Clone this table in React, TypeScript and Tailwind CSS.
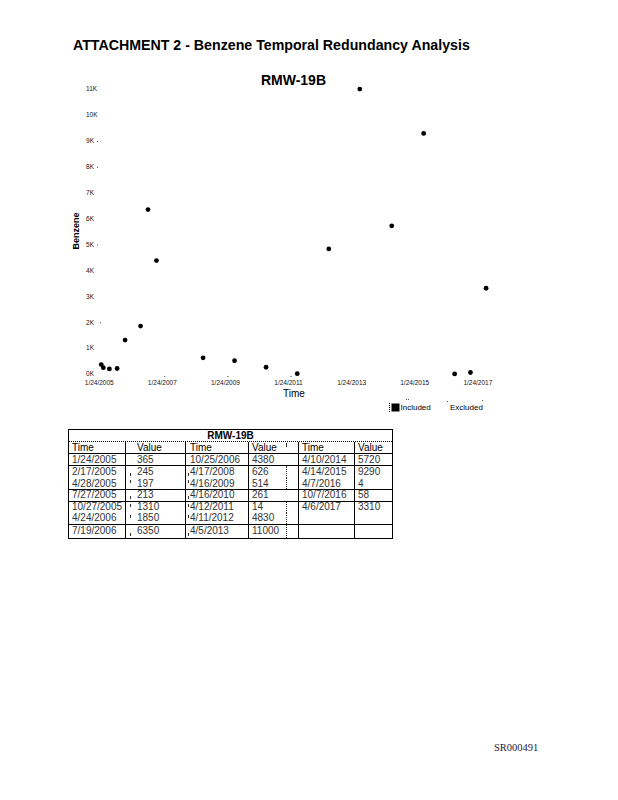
import React from "react";

const DAY = 86400000;
const BASE = Date.UTC(2005, 0, 21);
const xOf = (m: number, d: number, y: number) =>
  101 + ((Date.UTC(y, m - 1, d) - BASE) / DAY) * 0.08638;
const yOf = (v: number) => 374 - v * 0.0259;

const points: [number, number, number, number][] = [
  [1, 24, 2005, 365],
  [2, 17, 2005, 245],
  [4, 28, 2005, 197],
  [7, 27, 2005, 213],
  [10, 27, 2005, 1310],
  [4, 24, 2006, 1850],
  [7, 19, 2006, 6350],
  [10, 25, 2006, 4380],
  [4, 17, 2008, 626],
  [4, 16, 2009, 514],
  [4, 16, 2010, 261],
  [4, 12, 2011, 14],
  [4, 11, 2012, 4830],
  [4, 5, 2013, 11000],
  [4, 10, 2014, 5720],
  [4, 14, 2015, 9290],
  [4, 7, 2016, 4],
  [10, 7, 2016, 58],
  [4, 6, 2017, 3310],
];

const years = [2005, 2007, 2009, 2011, 2013, 2015, 2017];

type Row = {
  h: string;
  bottom: boolean;
  tick: "," | "'" | null;
  dot4: "full" | "top" | null;
  cells: string[];
  head?: boolean;
};

const rows: Row[] = [
  { h: "h-[12px]", bottom: true, tick: null, dot4: "top", head: true, cells: ["Time", "Value", "Time", "Value", "Time", "Value"] },
  { h: "h-[12px]", bottom: true, tick: null, dot4: null, cells: ["1/24/2005", "365", "10/25/2006", "4380", "4/10/2014", "5720"] },
  { h: "h-[12px]", bottom: false, tick: ",", dot4: "full", cells: ["2/17/2005", "245", "4/17/2008", "626", "4/14/2015", "9290"] },
  { h: "h-[12px]", bottom: true, tick: "'", dot4: "full", cells: ["4/28/2005", "197", "4/16/2009", "514", "4/7/2016", "4"] },
  { h: "h-[11.5px]", bottom: true, tick: ",", dot4: null, cells: ["7/27/2005", "213", "4/16/2010", "261", "10/7/2016", "58"] },
  { h: "h-[11.5px]", bottom: false, tick: "'", dot4: "full", cells: ["10/27/2005", "1310", "4/12/2011", "14", "4/6/2017", "3310"] },
  { h: "h-[11.5px]", bottom: true, tick: "'", dot4: "full", cells: ["4/24/2006", "1850", "4/11/2012", "4830", "", ""] },
  { h: "h-[13px]", bottom: false, tick: ",", dot4: "full", cells: ["7/19/2006", "6350", "4/5/2013", "11000", "", ""] },
];

function Tick({ kind }: { kind: "," | "'" | null }) {
  if (kind === ",")
    return <span className="w-[1px] h-[3px] bg-[#333] self-end mb-[2px] shrink-0" />;
  if (kind === "'")
    return <span className="w-[1px] h-[3px] bg-[#333] self-start mt-[2px] shrink-0" />;
  return <span className="w-[1px] h-[3px] shrink-0" />;
}

function TableRow({ r }: { r: Row }) {
  const txt = r.head ? "text-black" : "text-[#333]";
  return (
    <div
      className={`grid grid-cols-[56px_60px_63px_50px_56px_38px] ${r.h} ${
        r.bottom ? "border-b border-black" : ""
      } ${txt}`}
    >
      <div className="flex items-center pl-[3px] whitespace-nowrap">{r.cells[0]}</div>
      <div className="flex items-center border-l border-black pl-[4px] whitespace-nowrap">
        <Tick kind={r.tick} />
        <span className="ml-[6px]">{r.cells[1]}</span>
      </div>
      <div className="flex items-center border-l border-black pl-[2px] whitespace-nowrap">
        <Tick kind={r.tick} />
        <span className="ml-[1px]">{r.cells[2]}</span>
      </div>
      <div className="flex border-l border-black whitespace-nowrap">
        {r.dot4 === "full" ? (
          <div className="w-[38px] h-full flex items-center pl-[3px] border-r border-dotted border-[#333]">
            {r.cells[3]}
          </div>
        ) : (
          <div className="w-[38px] h-full flex items-center pl-[3px] relative">
            {r.cells[3]}
            {r.dot4 === "top" && (
              <span className="absolute right-0 top-[1px] w-[1px] h-[4px] bg-[#333]" />
            )}
          </div>
        )}
      </div>
      <div className="flex items-center border-l border-black pl-[3px] whitespace-nowrap">{r.cells[4]}</div>
      <div className="flex items-center border-l border-black pl-[3px] whitespace-nowrap">{r.cells[5]}</div>
    </div>
  );
}

function Chart() {
  return (
    <svg
      width={618}
      height={360}
      viewBox="0 60 618 360"
      className="block mt-[7px]"
    >
      <text x={293.5} y={85} textAnchor="middle" fontSize={14} fontWeight="bold" fill="#000">
        RMW-19B
      </text>

      {Array.from({ length: 12 }, (_, k) => (
        <text key={k} x={86} y={374 - k * 25.9 + 2.3} fontSize={6.5} fill="#111">
          {k}K
        </text>
      ))}
      {[9, 8, 5].map((k) => (
        <rect key={k} x={97} y={374 - k * 25.9} width={1} height={1} fill="#444" />
      ))}
      <rect x={100} y={374 - 2 * 25.9} width={1} height={1} fill="#444" />

      {years.map((y) => {
        const x = xOf(1, 24, y);
        return (
          <text key={y} x={x - 2} y={384.5} textAnchor="middle" fontSize={6.5} fill="#111">
            1/24/{y}
          </text>
        );
      })}
      {[2007, 2009, 2011].map((y) => (
        <rect key={y} x={xOf(1, 24, y)} y={376} width={1} height={1} fill="#444" />
      ))}

      <text x={294} y={397} textAnchor="middle" fontSize={10} fill="#000">
        Time
      </text>
      <text
        x={0}
        y={0}
        transform="translate(79 231) rotate(-90)"
        textAnchor="middle"
        fontSize={9}
        fontWeight="bold"
        fill="#000"
      >
        Benzene
      </text>

      {points.map(([m, d, y, v], i) => (
        <circle key={i} cx={xOf(m, d, y)} cy={yOf(v)} r={2.4} fill="#000" />
      ))}

      <line x1={389.5} y1={403} x2={389.5} y2={412} stroke="#000" strokeWidth={1} strokeDasharray="1 1" />
      <rect x={391.5} y={403.5} width={8} height={8} fill="#000" />
      <text x={400.5} y={410} fontSize={8} fill="#000">
        Included
      </text>
      <rect x={406} y={399} width={1} height={1} fill="#555" />
      <rect x={408} y={399} width={1} height={1} fill="#555" />
      <rect x={447} y={401} width={1} height={1} fill="#555" />
      <rect x={482} y={400} width={1} height={1} fill="#555" />
      <text x={450} y={410} fontSize={8} fill="#000">
        Excluded
      </text>
    </svg>
  );
}

export default function App() {
  return (
    <div className="w-[618px] h-[800px] bg-white overflow-hidden font-['Liberation_Sans',Arial,sans-serif]">
      <div className="pt-[37px] pl-[73px] text-[14.2px] leading-[16px] font-bold text-black whitespace-nowrap">
        ATTACHMENT 2 - Benzene Temporal Redundancy Analysis
      </div>
      <Chart />
      <div className="mt-[9px] ml-[68px] w-[325px] border border-black text-[10px] leading-none">
        <div className="h-[12px] border-b border-dotted border-black flex items-center justify-center font-bold text-black">
          RMW-19B
        </div>
        {rows.map((r, i) => (
          <TableRow key={i} r={r} />
        ))}
      </div>
      <div className="mt-[203px] pl-[494px] text-[10.5px] leading-[12px] text-[#1f2040] font-['Liberation_Serif',serif]">
        SR000491
      </div>
    </div>
  );
}
